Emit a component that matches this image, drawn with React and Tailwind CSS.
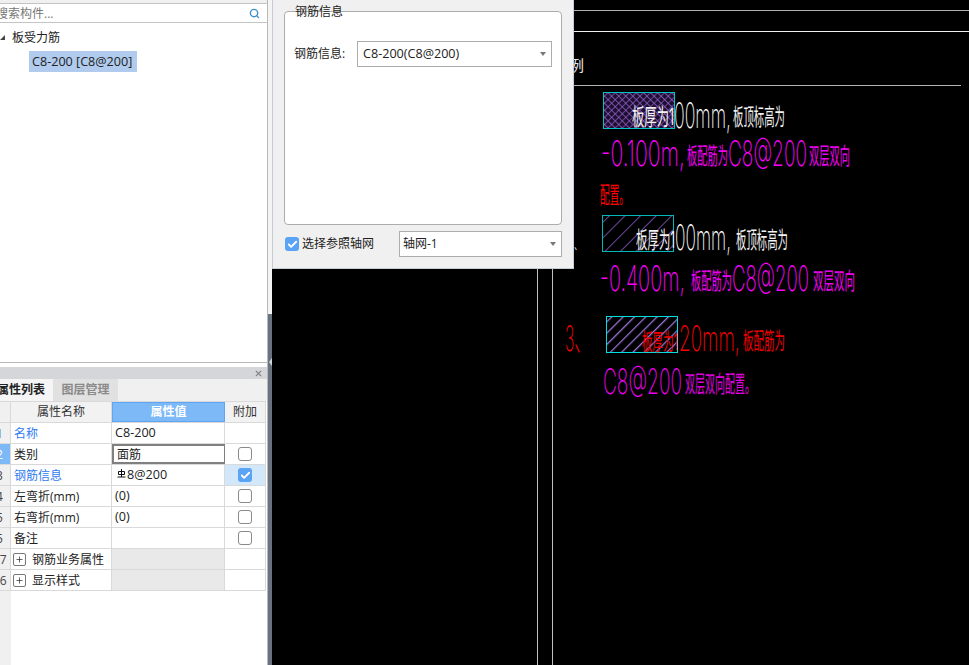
import React from 'react';
import { Search, Check, X, Plus } from 'lucide-react';

const rows = [
    { no: '1', name: '名称', value: 'C8-200', blue: true, latin: true },
    { no: '2', name: '类别', value: '面筋', check: 'off', active: true },
    { no: '3', name: '钢筋信息', value: '8@200', blue: true, check: 'on', rebar: true, latin: true },
    { no: '4', name: '左弯折(mm)', value: '(0)', check: 'off', latin: true },
    { no: '5', name: '右弯折(mm)', value: '(0)', check: 'off', latin: true },
    { no: '5', name: '备注', value: '', check: 'off' },
    { no: '17', name: '钢筋业务属性', group: true },
    { no: '16', name: '显示样式', group: true },
];

const Caret = () => (
    <svg width="6" height="4" viewBox="0 0 6 4"><polygon points="0,0 6,0 3,4" fill="#777777" /></svg>
);

const CheckBox = ({ on }) => (
    on ? (
        <span className="flex h-[14px] w-[14px] items-center justify-center rounded-[3px] bg-[#5ba3f5]">
            <Check size={11} strokeWidth={4} color="#ffffff" />
        </span>
    ) : (
        <span className="block h-[14px] w-[14px] rounded-[3px] border border-[#8a8a8a] bg-white" />
    )
);

// rebar grade mark, not a character the fonts have
const RebarMark = () => (
    <svg width="9" height="9" viewBox="0 0 9 9" className="mb-[4px] ml-[2px] mr-[1px] shrink-0">
        <path d="M4.5 0V8M1.5 2.5H7.5V5.5H1.5ZM0.5 8H8.5" fill="none" stroke="#111" strokeWidth="1" />
    </svg>
);

const PropRow = ({ row }) => (
    <div className="flex h-[21px] border-b border-[#d9d9d9]">
        <div className={`w-[11px] shrink-0 overflow-hidden border-r border-[#d9d9d9] leading-[21px] ${row.active ? 'bg-[#7db8f7] text-white' : 'bg-[#f0f0f0] text-[#444]'}`}>
            <span className={`block whitespace-nowrap ${row.no.length > 1 ? 'ml-[-7px]' : 'ml-[-4px]'}`}>{row.no}</span>
        </div>
        <div className={`flex w-[101px] shrink-0 items-center whitespace-nowrap border-r border-[#d9d9d9] pt-[1px] ${row.group ? 'pl-[2px]' : 'pl-[3px]'} ${row.blue ? 'text-[#2f7bf0]' : 'text-[#222]'}`}>
            {row.group && (
                <span className="mr-[6px] flex h-[13px] w-[13px] items-center justify-center rounded-[2px] border border-[#777] bg-white">
                    <Plus size={9} strokeWidth={2} color="#333" />
                </span>
            )}
            {row.name}
        </div>
        <div className={`flex w-[113px] shrink-0 items-center whitespace-nowrap border-r pl-[3px] pt-[1px] text-[#222] ${row.active ? 'border-2 border-[#808080] pl-[2px]' : 'border-[#d9d9d9]'} ${row.group ? 'bg-[#e9e9e9]' : ''} ${row.latin ? 'text-[12.6px]' : ''}`}>
            {row.rebar && <RebarMark />}
            {row.value}
        </div>
        <div className={`flex w-[41px] shrink-0 items-center justify-center border-r border-[#d9d9d9] ${row.check === 'on' ? 'bg-[#d3e7fb]' : ''}`}>
            {row.check && <CheckBox on={row.check === 'on'} />}
        </div>
    </div>
);

const Cad = ({ x, y, w, size, color, children, weight }) => (
    <text x={x} y={y} textLength={w} lengthAdjust="spacingAndGlyphs" fontSize={size} fill={color} fontWeight={weight || 400}
        fontFamily="'Inter','Noto Sans CJK SC',sans-serif">{children}</text>
);

const Num = (props) => <Cad size={35} weight={200} {...props} />;
const Han = (props) => <Cad size={23} weight={400} {...props} />;

const Drawing = () => (
    <svg className="absolute inset-0" width="697" height="665" viewBox="272 0 697 665">
        <defs>
            <pattern id="cross" width="5" height="5" patternUnits="userSpaceOnUse" patternTransform="rotate(45)">
                <rect width="5" height="5" fill="#1c1030" />
                <path d="M0 0H5M0 0V5" stroke="#9a5fd0" strokeWidth="1.3" />
            </pattern>
            <pattern id="thin" width="11" height="11" patternUnits="userSpaceOnUse" patternTransform="rotate(45)">
                <path d="M0 0V11" stroke="#9a68e0" strokeWidth="1.4" />
            </pattern>
            <pattern id="thick" width="8" height="8" patternUnits="userSpaceOnUse" patternTransform="rotate(45)">
                <path d="M0 0V8" stroke="#9a72d0" strokeWidth="2.6" />
            </pattern>
        </defs>

        <path d="M272 10.5H969" stroke="#b0b0b0" />
        <path d="M272 31.5H969" stroke="#f0f0f0" />
        <path d="M272 85.5H961" stroke="#b4b4b4" />
        <path d="M537.5 0V665M552.5 0V665" stroke="#c0c0c0" />

        <Han x={569} y={71} w={15} size={15} color="#e8e8e8">例</Han>
        <Han x={571} y={131} w={6} size={10} color="#bbbbbb">、</Han>
        <Han x={574} y={250} w={8} size={12} color="#dddddd">、</Han>

        <rect x="603.5" y="92.5" width="71" height="36" fill="url(#cross)" stroke="#00c4c4" />
        <Han x={632} y={125} w={42} color="#f2f2f2">板厚为1</Han>
        <Num x={674} y={128} w={57} color="#ffffff">00mm,</Num>
        <Han x={733} y={125} w={52} color="#f2f2f2">板顶标高为</Han>

        <Num x={601} y={166} w={84} color="#ff00ff">-0.100m,</Num>
        <Han x={687} y={164} w={41} color="#f000f0">板配筋为</Han>
        <Num x={728} y={166} w={79} color="#ff00ff">C8@200</Num>
        <Han x={809} y={164} w={41} color="#f000f0">双层双向</Han>

        <Han x={600} y={203} w={29} color="#ff0000">配置。</Han>

        <rect x="602.5" y="215.5" width="71" height="36" fill="url(#thin)" stroke="#00b8b8" />
        <Han x={636} y={248} w={39} color="#f2f2f2">板厚为1</Han>
        <Num x={675} y={250} w={56} color="#ffffff">00mm,</Num>
        <Han x={736} y={248} w={52} color="#f2f2f2">板顶标高为</Han>

        <Num x={600} y={291} w={85} color="#ff00ff">-0.400m,</Num>
        <Han x={691} y={289} w={41} color="#f000f0">板配筋为</Han>
        <Num x={732} y={291} w={77} color="#ff00ff">C8@200</Num>
        <Han x={813} y={289} w={42} color="#f000f0">双层双向</Han>

        <Num x={565} y={351} w={25} color="#ff0000">3、</Num>
        <rect x="606.5" y="316.5" width="71" height="36" fill="url(#thick)" stroke="#00e0e0" />
        <Han x={642} y={350} w={36} color="#f00000">板厚为1</Han>
        <Num x={679} y={351} w={61} color="#ff0000">20mm,</Num>
        <Han x={743} y={349} w={42} color="#f00000">板配筋为</Han>

        <Num x={603} y={394} w={79} color="#f000f0">C8@200</Num>
        <Han x={685} y={392} w={70} color="#e000e0">双层双向配置。</Han>
    </svg>
);

const RebarDialog = () => (
    <div className="absolute left-0 top-0 h-[269px] w-[302px] border-b border-l border-r border-[#c6ccd8] bg-[#f0f0f0] px-[11px] pt-[11px] text-[#222]">
        <div className="relative h-[214px] rounded-[4px] border border-[#adadad] bg-white px-[9px] pt-[29px]">
            <span className="absolute left-[10px] top-[-8px] leading-[16px]">钢筋信息</span>
            <div className="flex items-center">
                <span className="w-[63px] whitespace-nowrap">钢筋信息:</span>
                <div className="flex h-[26px] w-[195px] items-center justify-between border border-[#adadad] bg-white pl-[5px] pr-[5px] text-[12.6px]">
                    C8-200(C8@200)
                    <Caret />
                </div>
            </div>
        </div>
        <div className="mt-[6px] flex items-center pl-[1px]">
            <CheckBox on />
            <span className="ml-[3px] w-[97px] whitespace-nowrap">选择参照轴网</span>
            <div className="flex h-[26px] w-[163px] items-center justify-between border border-[#adadad] bg-white pl-[3px] pr-[5px]">
                轴网-1
                <Caret />
            </div>
        </div>
    </div>
);

const App = () => {
    return (
        <div className="flex h-[665px] w-[969px] overflow-hidden bg-white font-['Open_Sans','Noto_Sans_CJK_SC',sans-serif] text-[12px]">
            <div className="flex w-[268px] shrink-0 flex-col border-r border-[#b9b9b9]">
                <div className="h-[4px] shrink-0 border-b border-[#c4c4c4] bg-[#f0f0f0]" />
                <div className="flex h-[19px] shrink-0 items-center justify-between overflow-hidden border-b border-[#c4c4c4] pr-[7px] pt-[1px] text-[#777]">
                    <span className="ml-[-4px] whitespace-nowrap">搜索构件...</span>
                    <Search size={11} strokeWidth={3} color="#3a90c8" />
                </div>
                <div className="h-[339px] shrink-0 text-[#222]">
                    <div className="flex h-[28px] items-center pt-[2px]">
                        <svg width="12" height="6" viewBox="0 0 12 6"><polygon points="0,5 5,0 5,5" fill="#444" /></svg>
                        <span>板受力筋</span>
                    </div>
                    <div className="ml-[29px] flex h-[21px] w-[108px] items-center bg-[#b0cbed] pl-[3px] pt-[1px] text-[12.6px] whitespace-nowrap">C8-200 [C8@200]</div>
                </div>
                <div className="h-[5px] shrink-0 border-t border-[#b9b9b9]" />
                <div className="flex h-[12px] shrink-0 items-center justify-end bg-[#d5d6da] pr-[4px]">
                    <X size={9} strokeWidth={3} color="#858585" />
                </div>
                <div className="flex h-[22px] shrink-0 bg-[#f0f0f0] font-bold">
                    <div className="flex w-[53px] items-center justify-end overflow-hidden whitespace-nowrap bg-[#f5f5f5] pr-[8px] text-[#222]">属性列表</div>
                    <div className="flex w-[65px] items-center justify-center bg-[#e1e1e1] text-[#8a8a8a]">图层管理</div>
                </div>
                <div className="flex min-h-0 flex-1">
                    <div className="w-[266px] shrink-0">
                        <div className="flex h-[22px] border-y border-[#d9d9d9] text-[#333]">
                            <div className="w-[11px] shrink-0 border-r border-[#d9d9d9] bg-[#f0f0f0]" />
                            <div className="flex w-[101px] shrink-0 items-center justify-center border-r border-[#d9d9d9] bg-[#f2f2f2]">属性名称</div>
                            <div className="flex w-[113px] shrink-0 items-center justify-center border border-[#5ea6f2] bg-[#7db8f7] font-bold text-white">属性值</div>
                            <div className="flex w-[41px] shrink-0 items-center justify-center border-r border-[#d9d9d9] bg-[#f2f2f2]">附加</div>
                        </div>
                        {rows.map((row, index) => <PropRow key={index} row={row} />)}
                        <div className="h-[80px] w-[11px] bg-[#f0f0f0]" />
                    </div>
                </div>
            </div>
            <div className="relative flex w-[4px] shrink-0 flex-col">
                <div className="h-[314px] bg-[#f4f4f4]" />
                <div className="flex-1 bg-[#68737f]" />
                <svg className="absolute left-[1px] top-[358px]" width="3" height="8" viewBox="0 0 3 8"><polygon points="3,0 3,8 0,4" fill="#d0d4d8" /></svg>
            </div>
            <div className="relative flex-1 bg-black">
                <Drawing />
                <RebarDialog />
            </div>
        </div>
    );
}

export default App;
